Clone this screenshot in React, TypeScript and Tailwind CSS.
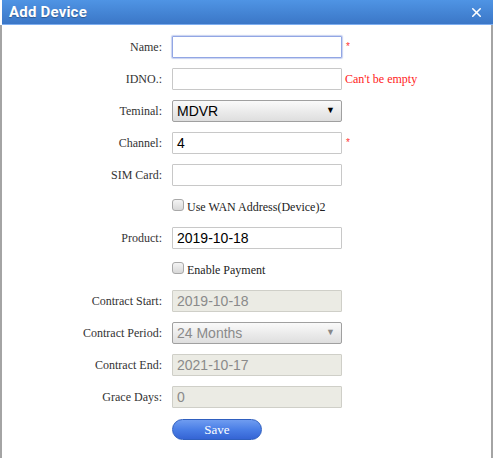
import { X } from "lucide-react";

const serif = "font-['Liberation_Serif',serif]";
const sans = "font-['Liberation_Sans',Arial,sans-serif]";

function Label({ text }: { text: string }) {
  return <div className={`${serif} text-right text-[12px] text-[#333]`}>{text}</div>;
}

function TextInput({ value = "", focused = false, disabled = false }: { value?: string; focused?: boolean; disabled?: boolean }) {
  let cls = "bg-white border-[#c8c8c8] text-black";
  if (focused) cls = "bg-white border-[#92a6e4] shadow-[0_0_1px_1px_rgba(146,166,228,0.5)] text-black";
  if (disabled) cls = "bg-[#ebebe4] border-[#cfcfc8] text-[#8a8a8a]";
  return (
    <div className={`${sans} w-[170px] h-[22px] border rounded-[1px] px-[4px] flex items-center text-[14px] ${cls}`}>
      {value}
    </div>
  );
}

function Select({ value, disabled = false }: { value: string; disabled?: boolean }) {
  return (
    <div
      className={`${sans} w-[170px] h-[22px] border border-[#a0a0a0] rounded-[2px] pl-[4px] pr-[6px] flex items-center justify-between text-[14px] bg-gradient-to-b from-[#fafafa] to-[#dedede] ${
        disabled ? "text-[#8a8a8a]" : "text-black"
      }`}
    >
      <span>{value}</span>
      <span className={`text-[9px] ${disabled ? "text-[#888]" : "text-black"}`}>▼</span>
    </div>
  );
}

function Checkbox({ text }: { text: string }) {
  return (
    <div className="flex items-center gap-[3px]">
      <div className="w-[12px] h-[12px] mt-[-3px] rounded-[3px] border border-[#a8a8a8] bg-gradient-to-b from-[#f4f4f4] to-[#d8d8d8]" />
      <span className={`${serif} text-[12px] text-[#222]`}>{text}</span>
    </div>
  );
}

function Row({ label, h = "h-[32px]", children }: { label?: string; h?: string; children: React.ReactNode }) {
  return (
    <div className={`grid grid-cols-[160px_1fr] gap-x-[10px] items-center ${h}`}>
      {label ? <Label text={label} /> : <div />}
      <div className="flex items-center">{children}</div>
    </div>
  );
}

function Star() {
  return <span className={`${sans} text-[#f33] text-[10px] ml-[4px] mt-[-2px]`}>*</span>;
}

export default function App() {
  return (
    <div className="w-[494px] h-[458px] bg-white overflow-hidden">
      <div className="w-[493px] h-full flex flex-col">
        <div className="h-[25px] shrink-0 bg-gradient-to-b from-[#4f94e4] to-[#3b77c7] border-b border-[#7eaef0] ml-[2px] flex items-center justify-between pl-[7px] pr-[9px]">
          <span className="font-['Roboto',sans-serif] font-bold text-[15px] text-white tracking-[0.2px] [text-shadow:0_1px_1px_rgba(0,0,0,0.3)]">
            Add Device
          </span>
          <X className="w-[15px] h-[15px] text-white" strokeWidth={2.5} />
        </div>
        <div className="flex-1 border-l-2 border-r-2 border-[#a4a4a4] pt-[6px]">
          <Row label="Name:">
            <TextInput focused />
            <Star />
          </Row>
          <Row label="IDNO.:">
            <TextInput />
            <span className={`${serif} text-[12px] text-[#f22] ml-[3px]`}>Can't be empty</span>
          </Row>
          <Row label="Teminal:">
            <Select value="MDVR" />
          </Row>
          <Row label="Channel:">
            <TextInput value="4" />
            <Star />
          </Row>
          <Row label="SIM Card:">
            <TextInput />
          </Row>
          <Row h="h-[31px]">
            <Checkbox text="Use WAN Address(Device)2" />
          </Row>
          <Row label="Product:">
            <TextInput value="2019-10-18" />
          </Row>
          <Row h="h-[31px]">
            <Checkbox text="Enable Payment" />
          </Row>
          <Row label="Contract Start:">
            <TextInput value="2019-10-18" disabled />
          </Row>
          <Row label="Contract Period:">
            <Select value="24 Months" disabled />
          </Row>
          <Row label="Contract End:">
            <TextInput value="2021-10-17" disabled />
          </Row>
          <Row label="Grace Days:">
            <TextInput value="0" disabled />
          </Row>
          <Row>
            <button
              className={`${serif} w-[90px] h-[21px] rounded-full border border-[#2f5fbf] bg-gradient-to-b from-[#6f9cf0] via-[#4a7ee6] to-[#3564d4] text-white text-[13px] leading-none`}
            >
              Save
            </button>
          </Row>
        </div>
      </div>
    </div>
  );
}
